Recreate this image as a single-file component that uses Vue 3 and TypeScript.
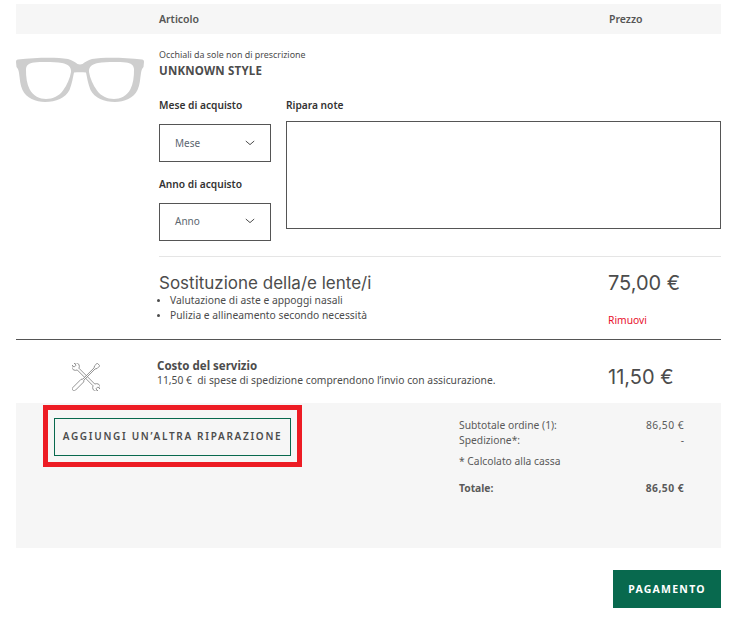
<script setup lang="ts">
const bullets: string[] = ['Valutazione di aste e appoggi nasali', 'Pulizia e allineamento secondo necessità']
</script>

<template>
  <main class="page">
    <header class="head">
      <span class="head-item">Articolo</span>
      <span class="head-price">Prezzo</span>
    </header>

    <section class="item">
      <svg class="glasses" viewBox="0 0 128 46" width="128" height="46" aria-hidden="true">
        <path fill="#cecece" fill-rule="evenodd" d="M2 2.500C20 .5 40 0 52 2C56 3 59 5 61.500 7C63 7.500 65 7.500 66.500 7C69 5 72 3 76 2C88 0 108 .5 126 2.500C127.500 2.700 128 3.500 128 5L127.500 10C126 11.500 125.500 13 125 16C124 22 124 28 121.500 33C118 41 108 45 99 45C88 45 78.500 41 74.500 33C72 27 71 20 70 15.500C66 15.300 62 15.300 58 15.500C57 20 56 27 53.500 33C49.500 41 40 45 29 45C20 45 10 41 6.500 33C4 28 4 22 3 16C2.500 13 2 11.500 .5 10L0 5C0 3.500 .5 2.700 2 2.500ZM18 5.500C13 6 10.500 8 10 12C9.800 20 11 27 13.500 32C17 39 24 42 30 42C37 42 43 39 47 33.500C51 28 54 21 55 15C55.500 10 52 7 46 6C38 4.800 26 4.800 18 5.500ZM110 5.500C102 4.800 90 4.800 82 6C76 7 72.500 10 73 15C74 21 77 28 81 33.500C85 39 91 42 98 42C104 42 111 39 114.500 32C117 27 118.200 20 118 12C117.500 8 115 6 110 5.500Z" />
      </svg>

      <div class="details">
        <p class="kind">Occhiali da sole non di prescrizione</p>
        <h2 class="style-name">UNKNOWN STYLE</h2>

        <div class="form">
          <div class="dates">
            <label class="field-label">Mese di acquisto</label>
            <div class="select select-first">
              <span>Mese</span>
              <svg width="10" height="6" viewBox="0 0 10 6" aria-hidden="true"><path d="M.8 1 5 4.600 9.200 1" fill="none" stroke="#4c4c4c" stroke-width="1" /></svg>
            </div>
            <label class="field-label field-label-second">Anno di acquisto</label>
            <div class="select select-second">
              <span>Anno</span>
              <svg width="10" height="6" viewBox="0 0 10 6" aria-hidden="true"><path d="M.8 1 5 4.600 9.200 1" fill="none" stroke="#4c4c4c" stroke-width="1" /></svg>
            </div>
          </div>
          <div class="notes">
            <label class="field-label">Ripara note</label>
            <div class="notes-box"></div>
          </div>
        </div>

        <div class="repair">
          <div class="repair-text">
            <h3 class="repair-title">Sostituzione della/e lente/i</h3>
            <ul class="repair-list">
              <li v-for="b in bullets" :key="b">{{ b }}</li>
            </ul>
          </div>
          <div class="repair-price">
            <div class="big-price">75,00 €</div>
            <a class="remove">Rimuovi</a>
          </div>
        </div>
      </div>
    </section>

    <section class="service">
      <div class="service-icon">
        <svg width="28" height="28" viewBox="-15 -15 30 30" aria-hidden="true">
          <g fill="#fff" stroke="#777" stroke-width=".8" stroke-linejoin="round">
            <path transform="rotate(-45)" d="M-1.300 12C-4 13-4.500 15.500-4 17.500L-1.500 19.500-1.500 16.500 1.500 16.500 1.500 19.500 4 17.500C4.500 15.500 4 13 1.300 12L1.300-12C4-13 4.500-15.500 4-17.500L1.500-19.500 1.500-16.500-1.500-16.500-1.500-19.500-4-17.500C-4.500-15.500-4-13-1.300-12Z" />
            <path transform="rotate(45)" d="M-.8 4-.8-13-2-15-2-19 2-19 2-15 .8-13 .8 4 2 5.500 2 18C2 19.500 1 20 0 20C-1 20-2 19.500-2 18L-2 5.500Z" />
          </g>
        </svg>
      </div>
      <div class="service-text">
        <h3 class="service-title">Costo del servizio</h3>
        <p class="service-desc">11,50 €&nbsp; di spese di spedizione comprendono l’invio con assicurazione.</p>
      </div>
      <div class="big-price service-price">11,50 €</div>
    </section>

    <section class="summary">
      <div class="add-wrap">
        <button class="add-btn" type="button">AGGIUNGI UN’ALTRA RIPARAZIONE</button>
      </div>
      <div class="totals">
        <div class="line"><span>Subtotale ordine (1):</span><span class="num">86,50 €</span></div>
        <div class="line"><span>Spedizione*:</span><span>-</span></div>
        <p class="calc">* Calcolato alla cassa</p>
        <div class="line total"><span>Totale:</span><span class="num">86,50 €</span></div>
      </div>
    </section>

    <footer class="foot">
      <button class="pay" type="button">PAGAMENTO</button>
    </footer>
  </main>
</template>

<style>
html, body { margin: 0; background: #fff; }
</style>

<style scoped>
.page {
  width: 705px;
  height: 641px;
  margin-left: 16px;
  padding-top: 4px;
  box-sizing: border-box;
  font-family: "Noto Sans", "Open Sans", sans-serif;
  color: #4c4c4c;
  overflow: hidden;
}
p, h2, h3, ul { margin: 0; padding: 0; }
.head {
  display: flex;
  height: 29px;
  padding-bottom: 1px;
  align-items: center;
  background: #f6f6f6;
  font-size: 10.500px;
  font-weight: 600;
  padding-left: 143px;
  color: #555;
}
.head-item { width: 450px; }
.item { display: flex; height: 305px; border-bottom: 1px solid #555; }
.glasses { flex: none; width: 128px; height: 46px; margin: 23px 15px 0 0; }
.details { flex: 1; padding-top: 15px; }
.kind { font-size: 8.900px; line-height: 12px; }
.style-name { font-size: 11.500px; line-height: 16px; font-weight: 700; letter-spacing: .2px; margin-top: 2px; }
.form { display: flex; gap: 15px; height: 158px; margin-top: 19px; border-bottom: 1px solid #e5e5e5; }
.field-label { display: block; font-size: 10.200px; line-height: 14px; font-weight: 600; color: #333; }
.dates { width: 112px; flex: none; }
.select {
  display: flex; align-items: center; justify-content: space-between;
  height: 38px; box-sizing: border-box; border: 1px solid #555;
  padding: 0 15px; font-size: 10px; color: #5c6670;
}
.select-first { margin-top: 12px; }
.field-label-second { margin-top: 15px; }
.select-second { margin-top: 12px; padding-bottom: 2px; }
.notes { flex: 1; }
.notes-box { height: 108px; box-sizing: border-box; border: 1px solid #555; margin-top: 9px; }
.repair { display: flex; height: 82px; }
.repair-text { width: 449px; padding-top: 16px; }
.repair-title { font-family: Inter, "Noto Sans", sans-serif; font-size: 17px; line-height: 20px; font-weight: 400; }
.repair-list { list-style: none; }
.repair-list li { position: relative; padding-left: 11px; font-size: 10.300px; line-height: 15px; }
.repair-list li::before { content: ""; position: absolute; left: -2px; top: 6px; width: 3px; height: 3px; border-radius: 50%; background: #4c4c4c; }
.repair-price { padding-top: 12px; }
.big-price { font-family: Inter, "Noto Sans", sans-serif; font-size: 20px; line-height: 28px; font-weight: 400; }
.remove { display: block; color: #e8112d; font-size: 10.300px; line-height: 14px; margin-top: 16px; }
.service { display: flex; height: 63px; }
.service-icon { width: 141px; flex: none; padding: 23px 0 0 56px; box-sizing: border-box; }
.service-icon svg { display: block; }
.service-text { width: 451px; flex: none; padding-top: 19px; }
.service-title { font-size: 11.500px; line-height: 14px; font-weight: 700; }
.service-desc { font-size: 10.300px; line-height: 14px; }
.service-price { padding-top: 23px; }
.summary { display: flex; height: 145px; background: #f6f6f6; }
.add-wrap { width: 443px; flex: none; padding: 2px 0 0 27px; box-sizing: border-box; }
.add-btn {
  display: block; width: 259px; height: 62px; box-sizing: border-box;
  border: 5px solid #ed1c24; background: transparent; padding: 0; position: relative;
  font-family: inherit; font-size: 10px; font-weight: 600; letter-spacing: 1.700px; color: #4c4c4c;
  text-align: center;
}
.add-btn::before { content: ""; position: absolute; left: 6px; right: 6px; top: 8px; bottom: 6px; border: 1px solid #08694e; }
.totals { width: 225px; padding-top: 15px; font-size: 10.300px; line-height: 15px; color: #5a5a5a; }
.line { display: flex; justify-content: space-between; }
.num { letter-spacing: .45px; }
.calc { margin-top: 6px; }
.total { margin-top: 12px; font-weight: 700; }
.foot { display: flex; justify-content: flex-end; margin-top: 22px; }
.pay {
  width: 108px; height: 38px; border: 0; background: #08694e; color: #fff;
  font-family: inherit; font-size: 10.500px; font-weight: 700; letter-spacing: 1.250px;
}
</style>
